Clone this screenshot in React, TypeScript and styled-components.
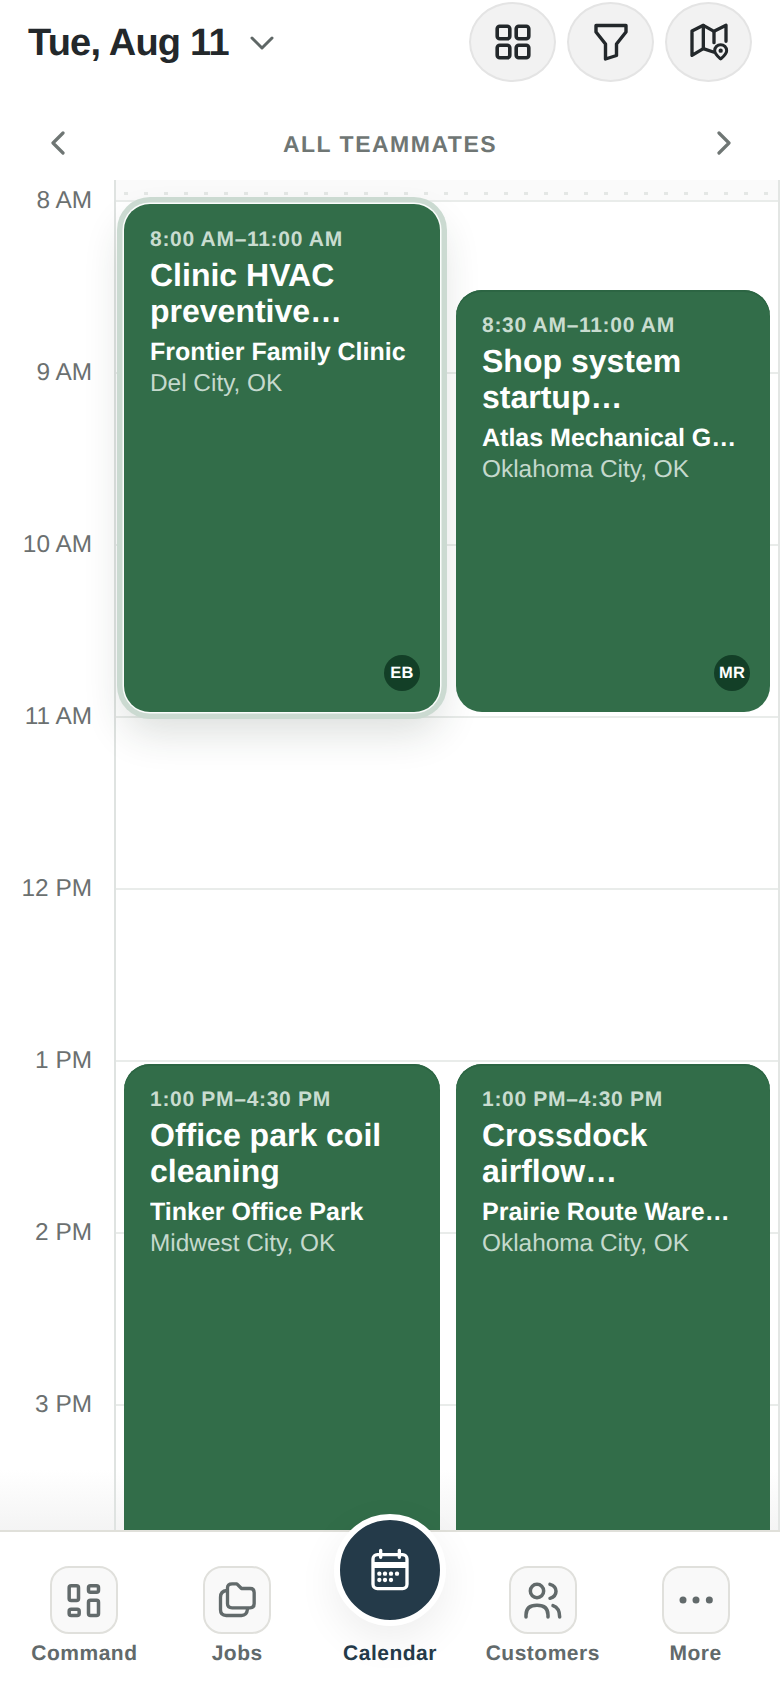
import React from "react";
import styled, { createGlobalStyle } from "styled-components";

const Global = createGlobalStyle`
  html, body { margin: 0; padding: 0; background: #fff; }
  * { box-sizing: border-box; }
  body {
    font-family: "Liberation Sans", Arial, sans-serif;
    text-rendering: geometricPrecision;
  }
`;

const Page = styled.div`
  width: 780px;
  height: 1688px;
  display: flex;
  flex-direction: column;
  overflow: hidden;
  background: #fff;
`;

const Header = styled.header`
  height: 96px;
  flex: none;
  padding: 2px 28px 0 28px;
  display: flex;
  justify-content: space-between;
  align-items: flex-start;
`;

const DateButton = styled.div`
  display: flex;
  align-items: center;
  gap: 21px;
  height: 82px;
`;

const DateTitle = styled.h1`
  margin: 0;
  font-size: 38px;
  line-height: 44px;
  font-weight: 700;
  letter-spacing: -0.75px;
  color: #23282b;
`;

const HeaderActions = styled.div`
  display: flex;
  gap: 11px;
`;

const RoundButton = styled.div`
  width: 87px;
  height: 80px;
  border-radius: 50%;
  background: #f2f2f2;
  border: 2px solid #e4e4e4;
  display: flex;
  align-items: center;
  justify-content: center;
  color: #23282b;
`;

const LaneBar = styled.div`
  height: 84px;
  flex: none;
  padding: 9px 49px 0 51px;
  display: flex;
  align-items: center;
  justify-content: space-between;
  color: #6f7674;
`;

const LaneTitle = styled.div`
  margin-right: 2px;
  padding-top: 2px;
  font-size: 23px;
  font-weight: 700;
  letter-spacing: 1.5px;
  line-height: 28px;
`;

const Schedule = styled.main`
  flex: 1;
  min-height: 0;
  display: flex;
  overflow: hidden;
  background: linear-gradient(to bottom, #fff calc(100% - 60px), #f4f4f4 100%);
`;

const Gutter = styled.div`
  width: 116px;
  flex: none;
  padding: 7px 22px 0 0;
  border-right: 2px solid #dfe3e1;
`;

const HourLabel = styled.div`
  height: 172px;
  line-height: 28px;
  font-size: 24.4px;
  color: #6b7070;
  text-align: right;
`;

const Lanes = styled.div`
  flex: 1;
  min-width: 0;
  border-right: 2px solid #e3e6e4;
`;

const AllDayStrip = styled.div`
  height: 20px;
  padding-top: 12px;
  background: #fafafa;
`;

const Dots = styled.div`
  height: 3px;
  background-image: linear-gradient(to right, #e4e7e5 4px, transparent 4px);
  background-size: 20px 3px;
  background-position: 8px 0;
`;

const Grid = styled.div`
  display: grid;
  grid-template-columns: 316px 314px;
  grid-auto-rows: 86px;
  column-gap: 16px;
  padding: 0 8px;
  background-image: linear-gradient(#e9ecea 2px, transparent 2px);
  background-size: 100% 172px;
`;

const Card = styled.article<{ $selected?: boolean; $col: number; $row: number; $span: number }>`
  grid-column: ${(p) => p.$col};
  grid-row: ${(p) => p.$row} / span ${(p) => p.$span};
  margin: 4px 0;
  min-width: 0;
  padding: 24px 20px 21px 26px;
  border-radius: 26px;
  background: #326d49;
  display: flex;
  flex-direction: column;
  box-shadow: ${(p) =>
    p.$selected
      ? "0 0 0 1.5px rgba(255,255,255,.9), 0 0 0 7px #cbdad1, 0 20px 40px rgba(30,50,40,.16)"
      : "inset 0 2px 0 #2c6543"};
`;

const CardTime = styled.div`
  font-size: 21px;
  line-height: 24px;
  font-weight: 700;
  letter-spacing: 0.7px;
  color: #c9dcd0;
`;

const CardTitle = styled.div`
  margin-top: 5px;
  padding-right: 6px;
  font-size: 32px;
  line-height: 36px;
  font-weight: 700;
  color: #fff;
  display: -webkit-box;
  -webkit-box-orient: vertical;
  -webkit-line-clamp: 2;
  overflow: hidden;
`;

const CardCompany = styled.div`
  margin-top: 8px;
  padding-right: 10px;
  font-size: 25px;
  line-height: 30px;
  font-weight: 700;
  color: #fff;
  white-space: nowrap;
  overflow: hidden;
  text-overflow: ellipsis;
`;

const CardPlace = styled.div`
  margin-top: 2px;
  font-size: 24.4px;
  line-height: 30px;
  color: #c5d9cd;
`;

const Avatar = styled.div`
  margin-top: auto;
  align-self: flex-end;
  width: 36px;
  height: 36px;
  border-radius: 50%;
  background: #133f27;
  color: #fff;
  font-size: 16.5px;
  font-weight: 700;
  letter-spacing: 0.2px;
  display: flex;
  align-items: center;
  justify-content: center;
`;

const BottomNav = styled.nav`
  height: 158px;
  flex: none;
  position: relative;
  z-index: 2;
  background: #fff;
  border-top: 2px solid #e0e0da;
  padding: 34px 8px 0;
  display: grid;
  grid-template-columns: repeat(5, 1fr);
`;

const Tab = styled.div`
  display: flex;
  flex-direction: column;
  align-items: center;
`;

const Tile = styled.div<{ $active?: boolean }>`
  display: flex;
  align-items: center;
  justify-content: center;
  flex: none;
  width: ${(p) => (p.$active ? "112px" : "68px")};
  height: ${(p) => (p.$active ? "112px" : "68px")};
  margin: ${(p) => (p.$active ? "-52px 0 8px" : "0")};
  border-radius: ${(p) => (p.$active ? "50%" : "19px")};
  background: ${(p) => (p.$active ? "#243a49" : "#f9f9f9")};
  border: ${(p) => (p.$active ? "6px solid #fff" : "2px solid #e0e0dc")};
  box-shadow: ${(p) => (p.$active ? "0 14px 40px rgba(0,0,0,.07)" : "none")};
  color: ${(p) => (p.$active ? "#fff" : "#626a6b")};
`;

const TabLabel = styled.div<{ $active?: boolean }>`
  margin-top: 8px;
  font-size: 21px;
  line-height: 24px;
  font-weight: 700;
  letter-spacing: 0.5px;
  white-space: nowrap;
  color: ${(p) => (p.$active ? "#243a49" : "#626a6b")};
`;

const GridIcon = () => (
  <svg width="36" height="36" viewBox="0 0 36 36" fill="none" stroke="currentColor" strokeWidth="3.6">
    <rect x="2.2" y="2.2" width="12.6" height="12.6" rx="2.5" />
    <rect x="21.2" y="2.2" width="12.6" height="12.6" rx="2.5" />
    <rect x="2.2" y="21.2" width="12.6" height="12.6" rx="2.5" />
    <rect x="21.2" y="21.2" width="12.6" height="12.6" rx="2.5" />
  </svg>
);

const FunnelIcon = () => (
  <svg width="36" height="38" viewBox="0 0 36 38" fill="none" stroke="currentColor" strokeWidth="3.4" strokeLinejoin="round">
    <path d="M3 2.5H33V9L23.5 21V32.5L12.5 36V21L3 9Z" />
  </svg>
);

const MapPinIcon = () => (
  <svg width="40" height="40" viewBox="745 70 120 120" fill="none" stroke="currentColor" strokeWidth="10" strokeLinejoin="round" strokeLinecap="round">
    <path d="M818 160L788 150L754 170V97L788 80L820 98L856 80V128" />
    <path d="M788 80V150M820 98V132" />
    <path d="M840 181C829 171 822 165 822 156A18 18 0 0 1 858 156C858 165 851 171 840 181Z" strokeWidth="9" />
    <circle cx="840" cy="156" r="3" strokeWidth="7" />
  </svg>
);

const ChevronDown = () => (
  <svg width="24" height="14" viewBox="0 0 24 14" fill="none" stroke="#5f6766" strokeWidth="3" strokeLinecap="round" strokeLinejoin="round">
    <path d="M2 2L12 12L22 2" />
  </svg>
);

const ChevronSide = ({ flip }: { flip?: boolean }) => (
  <svg width="14" height="24" viewBox="0 0 14 24" fill="none" stroke="#6f7674" strokeWidth="3.2" strokeLinecap="round" strokeLinejoin="round">
    <path d={flip ? "M2 2L12 12L2 22" : "M12 2L2 12L12 22"} />
  </svg>
);

const CommandIcon = () => (
  <svg width="40" height="40" viewBox="43.5 58.5 120 120" fill="none" stroke="currentColor" strokeWidth="10.5">
    <rect x="59" y="76" width="28" height="44" rx="6" />
    <rect x="117" y="76" width="30" height="19" rx="6" />
    <rect x="59" y="146" width="30" height="19" rx="6" />
    <rect x="117" y="119" width="30" height="46" rx="6" />
  </svg>
);

const JobsIcon = () => (
  <svg width="40" height="40" viewBox="502.5 58.5 120 120" fill="none" stroke="currentColor" strokeWidth="10" strokeLinejoin="round" strokeLinecap="round">
    <path d="M548 70H562L576 84H602Q614 84 614 96V130Q614 142 602 142H548Q534 142 534 130V82Q534 70 548 70Z" />
    <path d="M532 90Q513 92 513 110V148Q513 165 530 165H576Q592 165 594 146" />
  </svg>
);

const CalendarIcon = () => (
  <svg width="60" height="60" viewBox="0 0 180 180" fill="none">
    <rect x="39" y="44" width="102" height="102" rx="13" stroke="currentColor" strokeWidth="10" />
    <path d="M39 66H141V84H39Z" fill="currentColor" />
    <path d="M62 31V52M118 31V52" stroke="currentColor" strokeWidth="10" strokeLinecap="round" />
    <g fill="currentColor">
      {[58, 75, 93, 111].map((x) => (
        <circle key={x} cx={x} cy="101" r="6.5" />
      ))}
      {[58, 75, 93].map((x) => (
        <circle key={x} cx={x} cy="120" r="6.5" />
      ))}
    </g>
  </svg>
);

const CustomersIcon = () => (
  <svg width="40" height="40" viewBox="666 240 120 120" fill="none" stroke="currentColor" strokeWidth="10.5" strokeLinecap="round">
    <circle cx="708" cy="273" r="20" />
    <path d="M747 253Q765 258 765 274Q765 290 747 295" />
    <path d="M675 351V345Q675 316 708 316Q741 316 741 345V351" />
    <path d="M756 317Q776 324 776 351" />
  </svg>
);

const MoreIcon = () => (
  <svg width="40" height="40" viewBox="1127 240 120 120" fill="currentColor">
    <circle cx="1148" cy="300" r="10.5" />
    <circle cx="1187" cy="300" r="10.5" />
    <circle cx="1227" cy="300" r="10.5" />
  </svg>
);

const hours = ["8 AM", "9 AM", "10 AM", "11 AM", "12 PM", "1 PM", "2 PM", "3 PM"];

const jobs = [
  { col: 1, row: 1, span: 6, selected: true, time: "8:00 AM–11:00 AM", title: "Clinic HVAC preventive maintenance", company: "Frontier Family Clinic", place: "Del City, OK", who: "EB" },
  { col: 2, row: 2, span: 5, time: "8:30 AM–11:00 AM", title: "Shop system startup inspection", company: "Atlas Mechanical Group", place: "Oklahoma City, OK", who: "MR" },
  { col: 1, row: 11, span: 7, time: "1:00 PM–4:30 PM", title: "Office park coil cleaning", company: "Tinker Office Park", place: "Midwest City, OK", who: "EB" },
  { col: 2, row: 11, span: 7, time: "1:00 PM–4:30 PM", title: "Crossdock airflow rebalancing", company: "Prairie Route Warehouse", place: "Oklahoma City, OK", who: "MR" },
];

const tabs = [
  { label: "Command", icon: <CommandIcon /> },
  { label: "Jobs", icon: <JobsIcon /> },
  { label: "Calendar", icon: <CalendarIcon />, active: true },
  { label: "Customers", icon: <CustomersIcon /> },
  { label: "More", icon: <MoreIcon /> },
];

export default function App() {
  return (
    <Page>
      <Global />
      <Header>
        <DateButton>
          <DateTitle>Tue, Aug 11</DateTitle>
          <ChevronDown />
        </DateButton>
        <HeaderActions>
          <RoundButton><GridIcon /></RoundButton>
          <RoundButton><FunnelIcon /></RoundButton>
          <RoundButton><MapPinIcon /></RoundButton>
        </HeaderActions>
      </Header>
      <LaneBar>
        <ChevronSide />
        <LaneTitle>ALL TEAMMATES</LaneTitle>
        <ChevronSide flip />
      </LaneBar>
      <Schedule>
        <Gutter>
          {hours.map((h) => (
            <HourLabel key={h}>{h}</HourLabel>
          ))}
        </Gutter>
        <Lanes>
          <AllDayStrip>
            <Dots />
          </AllDayStrip>
          <Grid>
            {jobs.map((j) => (
              <Card key={j.title} $col={j.col} $row={j.row} $span={j.span} $selected={j.selected}>
                <CardTime>{j.time}</CardTime>
                <CardTitle>{j.title}</CardTitle>
                <CardCompany>{j.company}</CardCompany>
                <CardPlace>{j.place}</CardPlace>
                <Avatar>{j.who}</Avatar>
              </Card>
            ))}
          </Grid>
        </Lanes>
      </Schedule>
      <BottomNav>
        {tabs.map((t) => (
          <Tab key={t.label}>
            <Tile $active={t.active}>{t.icon}</Tile>
            <TabLabel $active={t.active}>{t.label}</TabLabel>
          </Tab>
        ))}
      </BottomNav>
    </Page>
  );
}
